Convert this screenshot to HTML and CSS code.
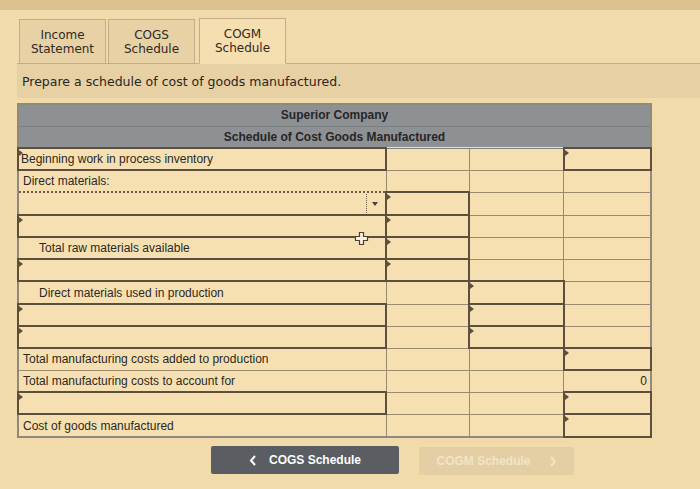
FILE: index.html
```html
<!DOCTYPE html>
<html>
<head>
<meta charset="utf-8">
<link rel="stylesheet" href="styles.css">
</head>
<body>
<div class="topbar"></div>
<div class="page">
  <div class="tabs">
    <div class="tab">Income<br>Statement</div>
    <div class="tab">COGS<br>Schedule</div>
    <div class="tab active">COGM<br>Schedule</div>
  </div>
  <div class="band">Prepare a schedule of cost of goods manufactured.</div>
  <table class="sched">
    <colgroup><col class="c1"><col class="c2"><col class="c3"><col class="c4"></colgroup>
    <tr class="hd"><td colspan="4">Superior Company</td></tr>
    <tr class="hd"><td colspan="4">Schedule of Cost Goods Manufactured</td></tr>
    <tr><td class="in lbl">Beginning work in process inventory</td><td></td><td></td><td class="in"></td></tr>
    <tr><td class="lbl">Direct materials:</td><td></td><td></td><td></td></tr>
    <tr class="tall"><td class="dd"><div class="ddw"><span class="ddsp"></span><span class="ddarrow"></span></div></td><td class="in"></td><td></td><td></td></tr>
    <tr><td class="in"></td><td class="in"></td><td></td><td></td></tr>
    <tr><td class="lbl ind">Total raw materials available</td><td class="in"></td><td></td><td></td></tr>
    <tr><td class="in"></td><td class="in"></td><td></td><td></td></tr>
    <tr class="tall"><td class="lbl ind">Direct materials used in production</td><td></td><td class="in"></td><td></td></tr>
    <tr><td class="in"></td><td></td><td class="in"></td><td></td></tr>
    <tr><td class="in"></td><td></td><td class="in"></td><td></td></tr>
    <tr><td class="lbl">Total manufacturing costs added to production</td><td></td><td></td><td class="in"></td></tr>
    <tr><td class="lbl">Total manufacturing costs to account for</td><td></td><td></td><td class="num">0</td></tr>
    <tr><td class="in"></td><td></td><td></td><td class="in"></td></tr>
    <tr class="tall"><td class="lbl">Cost of goods manufactured</td><td></td><td></td><td class="in"></td></tr>
  </table>
  <div class="nav">
    <button class="btn prev"><svg width="8" height="11" viewBox="0 0 8 11"><polyline points="6,1 2,5.5 6,10" fill="none" stroke="#ffffff" stroke-width="2"/></svg><span>COGS Schedule</span></button>
    <button class="btn next"><span>COGM Schedule</span><svg width="8" height="11" viewBox="0 0 8 11"><polyline points="2,1 6,5.5 2,10" fill="none" stroke="#f2e4c8" stroke-width="2"/></svg></button>
  </div>
</div>
<svg class="cursor" width="15" height="15" viewBox="0 0 15 15"><path d="M5.5 1.5h4v4h4v4h-4v4h-4v-4h-4v-4h4z" fill="#fbf1dc" stroke="#4a3f33" stroke-width="1.2"/></svg>
</body>
</html>
```
FILE: styles.css
```css
html, body {
  margin: 0;
  padding: 0;
  background: #f2dbab;
  width: 700px;
  height: 489px;
  overflow: hidden;
}
body {
  position: relative;
  font-family: "Liberation Sans", Arial, sans-serif;
  color: #2b2823;
}
.topbar {
  height: 10px;
  background: #dcc08d;
}
.page {
  padding-left: 17px;
}
.tabs {
  display: flex;
  align-items: flex-end;
  margin-top: 8px;
  padding-left: 2px;
  gap: 2px;
  position: relative;
  z-index: 1;
  margin-bottom: -1px;
}
.tab {
  width: 85px;
  height: 43px;
  border: 1px solid #c4ac88;
  border-bottom: 1px solid #c4ac88;
  background: #e8d1a4;
  font-family: "DejaVu Sans", Verdana, sans-serif;
  font-size: 12px;
  line-height: 14px;
  color: #2e2a24;
  text-align: center;
  display: flex;
  align-items: center;
  justify-content: center;
  box-sizing: content-box;
}
.tab.active {
  margin-left: 2px;
  background: #f5dfb1;
  height: 44px;
  border-bottom-color: #f5dfb1;
}
.band {
  height: 35px;
  background: #e6d0a4;
  border-top: 1px solid #c5ae8a;
  box-sizing: border-box;
  padding-left: 5px;
  display: flex;
  align-items: center;
  font-family: "DejaVu Sans", Verdana, sans-serif;
  font-size: 12.5px;
  color: #2a2621;
}
.sched {
  margin-top: 5px;
  border-collapse: collapse;
  table-layout: fixed;
  width: 635px;
  background: #f6e0b2;
  border: 2px solid #8f8a80;
  font-size: 12px;
}
col.c1 { width: 367px; }
col.c2 { width: 83px; }
col.c3 { width: 94px; }
col.c4 { width: 87px; }
.sched td {
  height: 22px;
  padding: 0 4px;
  border: 1px solid #9a8a6e;
  box-sizing: border-box;
  position: relative;
  white-space: nowrap;
}
.sched tr.tall td { height: 23px; }
.sched tr.hd td {
  background: #8e9193;
  border-color: #7d8082;
  text-align: center;
  font-weight: bold;
  color: #262626;
  height: 22px;
  padding-left: 0;
  padding-right: 0;
}
.sched td.lbl { padding-left: 4px; }
.sched td.ind { padding-left: 20px; }
.sched td.in {
  border: 2px solid #5d4f3e;
}
.sched td.in::before {
  content: "";
  position: absolute;
  left: 0;
  top: 1px;
  border-left: 4px solid #5d4f3e;
  border-top: 3px solid transparent;
  border-bottom: 3px solid transparent;
}
.sched td.in.lbl { padding-left: 2px; }
.sched td.dd {
  border: 2px dotted #6b5b47;
  padding: 0;
}
.ddw {
  display: flex;
  height: 19px;
}
.ddsp { flex: 1; }
.ddarrow {
  width: 18px;
  border-left: 1px dotted #6b5b47;
  position: relative;
}
.ddarrow::after {
  content: "";
  position: absolute;
  left: 5px;
  top: 8px;
  border-top: 4px solid #4a4036;
  border-left: 3.5px solid transparent;
  border-right: 3.5px solid transparent;
}
.sched td.num {
  text-align: right;
  padding-right: 3px;
}
.nav {
  display: flex;
  gap: 20px;
  margin-top: 8px;
  padding-left: 194px;
}
.btn {
  height: 28px;
  border: none;
  border-radius: 2px;
  font-family: "Liberation Sans", Arial, sans-serif;
  font-weight: bold;
  font-size: 12px;
  display: flex;
  align-items: center;
  justify-content: center;
  padding: 0;
}
.btn.prev {
  width: 188px;
  background: #5a5d61;
  color: #ffffff;
  gap: 12px;
}
.btn.next {
  width: 155px;
  background: #e4cea3;
  color: #f2e4c8;
  gap: 18px;
  margin-top: 1px;
}
.cursor {
  position: absolute;
  left: 354px;
  top: 231px;
}
```
